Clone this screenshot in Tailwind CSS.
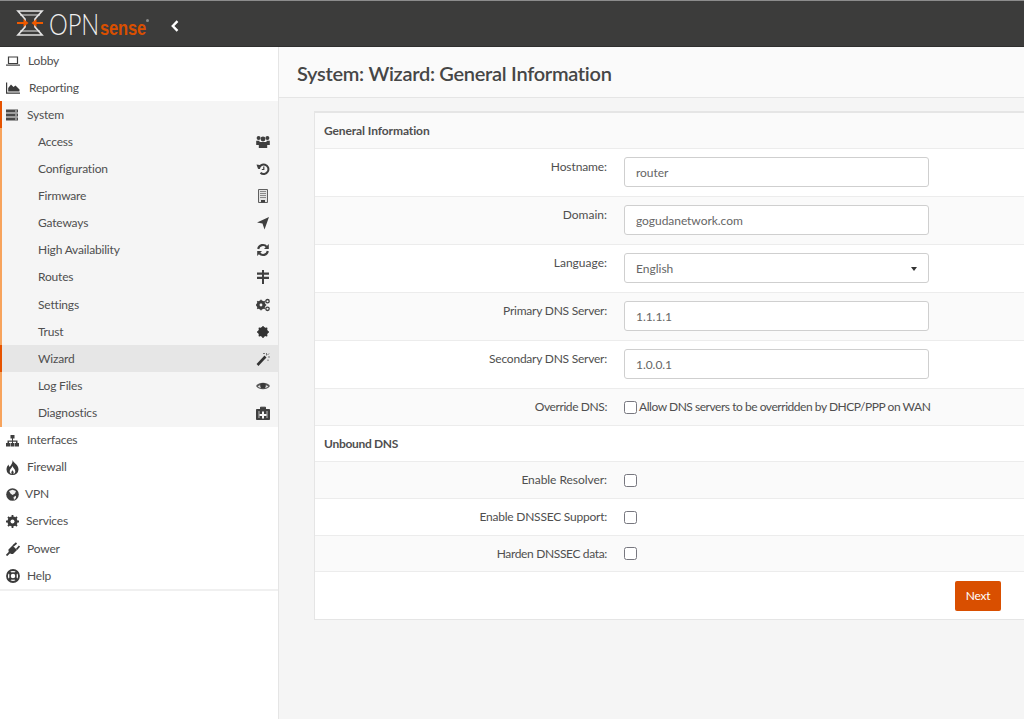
<!DOCTYPE html>
<html lang="en">
<head>
<meta charset="UTF-8">
<title>System: Wizard: General Information</title>
<script src="https://cdn.jsdelivr.net/npm/@tailwindcss/browser@4"></script>
</head>
<body class="h-[719px] w-[1024px] overflow-hidden bg-[#f5f5f5] font-['Lato',sans-serif] text-[12px] tracking-[-0.18px] text-[#4f4f4f]">

<header class="flex h-[47px] items-center border-t border-b border-t-[#8c8c8c] border-b-[#2f2f2e] bg-[#3c3c3b]">
  <svg class="ml-[17px] h-[30px] w-[136px] overflow-visible" viewBox="0 0 136 30">
    <g fill="none" stroke="#e4e4e4" stroke-width="1.700">
      <path d="M1 2h24l-7 8v8l7 8H1l7-8v-8z"/>
      <path d="M3 6h20M3 22h20" stroke-width="1"/>
    </g>
    <path d="M0 13h6.500v-3l5 4-5 4v-3H0zM26 13h-6.500v-3l-5 4 5 4v-3H26z" fill="#ef5a00"/>
    <text x="32" y="26" font-family="Lato, sans-serif" font-size="30" font-weight="300" fill="#f0f0f0" textLength="50" lengthAdjust="spacingAndGlyphs">OPN</text>
    <text x="83" y="26" font-family="Liberation Sans, sans-serif" font-size="21" font-weight="700" fill="#d94f00" textLength="46" lengthAdjust="spacingAndGlyphs">sense</text>
    <circle cx="130.500" cy="11.500" r="1.500" fill="#8c8c8c"/>
  </svg>
  <svg class="ml-[18px] mt-[5px] h-[12px] w-[8px]" viewBox="0 0 8 12"><path d="M6.500 1.200 1.800 6l4.700 4.800" fill="none" stroke="#fff" stroke-width="2.400"/></svg>
</header>

<div class="flex h-[672px]">
  <nav class="w-[279px] shrink-0 border-r border-[#e5e5e5] bg-white">
    <ul class="border-b-2 border-[#f0f0f0]">
      <li class="flex h-[27.12px] items-center"><svg class="ml-[6px] mr-[8px] h-[14px] w-[14px]" viewBox="0 0 14 14"><path d="M2.500 3h9v6.500h-9z" fill="none" stroke="#3f3f3f" stroke-width="1.200"/><path d="M0 10.500h14v1.200H0z" fill="#3f3f3f"/></svg><span>Lobby</span></li>
      <li class="flex h-[27.12px] items-center"><svg class="ml-[6px] mr-[9px] h-[14px] w-[14px] fill-[#3a3a3a]" viewBox="0 0 14 14"><path d="M0 1.500h1.200v10H14v1.200H0zM2.200 10.500V7L5 3.500 7.500 6 9.500 4.500 13.500 8.500v2z"/></svg><span>Reporting</span></li>
      <li class="flex h-[27.12px] items-center border-l-2 border-[#e65300] bg-[#f5f5f5]"><svg class="ml-[4px] mr-[9px] h-[12px] w-[12px] fill-[#4a4a4a]" viewBox="0 0 12 12"><path d="M0 .500h12v3H0zM0 4.500h12v3H0zM0 8.500h12v3H0z"/><path d="M9 1.500h2v1H9zM9 5.500h2v1H9zM9 9.500h2v1H9z" fill="#d8d8d8"/></svg><span>System</span></li>

      <li class="flex h-[27.12px] items-center justify-between border-l-2 border-[#f7a35c] bg-[#f5f5f5] pl-[36px] pr-[8px]"><span>Access</span><svg class="h-[14px] w-[14px] fill-[#3f3f3f]" viewBox="0 0 14 14"><circle cx="2.600" cy="3" r="2"/><circle cx="11.400" cy="3" r="2"/><circle cx="7" cy="4" r="2.400"/><path d="M.2 5.800h3.300v4.200H.2zM10.500 5.800h3.300V10h-3.300zM2.800 7h8.400v6H2.800z"/></svg></li>
      <li class="flex h-[27.12px] items-center justify-between border-l-2 border-[#f7a35c] bg-[#f5f5f5] pl-[36px] pr-[8px]"><span>Configuration</span><svg class="h-[14px] w-[14px]" viewBox="0 0 14 14"><path d="M3 7a4.700 4.700 0 1 1 1.500 3.700" fill="none" stroke="#3f3f3f" stroke-width="2"/><path d="M.5 2.500l5 .8-3.500 3.500z" fill="#3f3f3f"/><path d="M7.800 4.500v3H5.800" fill="none" stroke="#3f3f3f" stroke-width="1.200"/></svg></li>
      <li class="flex h-[27.12px] items-center justify-between border-l-2 border-[#f7a35c] bg-[#f5f5f5] pl-[36px] pr-[8px]"><span>Firmware</span><svg class="h-[14px] w-[14px]" viewBox="0 0 14 14"><path d="M2.500.5h9v13h-9z" fill="#e4e4e4" stroke="#5f5f5f"/><path d="M4 2.500h6M4 4.500h6M4 6.500h6M4 8.500h6" stroke="#8a8a8a"/><path d="M5 13.500V11h4v2.500z" fill="#3f3f3f"/></svg></li>
      <li class="flex h-[27.12px] items-center justify-between border-l-2 border-[#f7a35c] bg-[#f5f5f5] pl-[36px] pr-[8px]"><span>Gateways</span><svg class="h-[14px] w-[14px] fill-[#3f3f3f]" viewBox="0 0 14 14"><path d="M13 1 8.500 13.500 6.500 7.500 1 6.500z"/></svg></li>
      <li class="flex h-[27.12px] items-center justify-between border-l-2 border-[#f7a35c] bg-[#f5f5f5] pl-[36px] pr-[8px]"><span>High Availability</span><svg class="h-[14px] w-[14px]" viewBox="0 0 14 14"><path d="M2.200 6a4.800 4.800 0 0 1 8.500-2.200M11.800 8a4.800 4.800 0 0 1-8.500 2.200" fill="none" stroke="#3f3f3f" stroke-width="2.100"/><path d="M12.800 1v5H8zM1.200 13V8H6z" fill="#3f3f3f"/></svg></li>
      <li class="flex h-[27.12px] items-center justify-between border-l-2 border-[#f7a35c] bg-[#f5f5f5] pl-[36px] pr-[8px]"><span>Routes</span><svg class="h-[14px] w-[14px] fill-[#3f3f3f]" viewBox="0 0 14 14"><path d="M6 0h2v14H6zM1 2.500h12v2.200H1zM1 6.800h12V9H1z"/></svg></li>
      <li class="flex h-[27.12px] items-center justify-between border-l-2 border-[#f7a35c] bg-[#f5f5f5] pl-[36px] pr-[8px]"><span>Settings</span><svg class="h-[14px] w-[14px]" viewBox="0 0 14 14"><circle cx="5" cy="7" r="3.200" fill="none" stroke="#3f3f3f" stroke-width="2.600"/><path d="M5 1.800v10.400M-.2 7h10.400M1.300 3.300l7.400 7.400M8.700 3.300l-7.400 7.400" stroke="#3f3f3f" stroke-width="1.500"/><circle cx="5" cy="7" r="1.400" fill="#f5f5f5"/><circle cx="11.500" cy="3.200" r="1.700" fill="none" stroke="#3f3f3f" stroke-width="1.300"/><circle cx="11.500" cy="10.800" r="1.700" fill="none" stroke="#3f3f3f" stroke-width="1.300"/></svg></li>
      <li class="flex h-[27.12px] items-center justify-between border-l-2 border-[#f7a35c] bg-[#f5f5f5] pl-[36px] pr-[8px]"><span>Trust</span><svg class="h-[14px] w-[14px] fill-[#333]" viewBox="0 0 14 14"><circle cx="7" cy="7" r="5"/><path d="M7 1v12M1 7h12M2.800 2.800l8.400 8.400M11.200 2.800l-8.400 8.400" stroke="#333" stroke-width="1.400"/></svg></li>
      <li class="flex h-[27.12px] items-center justify-between border-l-2 border-[#e65300] bg-[#e6e6e6] pl-[36px] pr-[8px]"><span>Wizard</span><svg class="h-[14px] w-[14px]" viewBox="0 0 14 14"><path d="M1.500 13 9.500 4.500" stroke="#333" stroke-width="2.600"/><path d="M10.500 1v2.500M12 5h2M7 1.500h2M12 7.500v1.500M13 1.500l-1.500 1.500" stroke="#777"/></svg></li>
      <li class="flex h-[27.12px] items-center justify-between border-l-2 border-[#f7a35c] bg-[#f5f5f5] pl-[36px] pr-[8px]"><span>Log Files</span><svg class="h-[14px] w-[14px]" viewBox="0 0 14 14"><path d="M0 7C3 2.600 11 2.600 14 7 11 11.400 3 11.400 0 7z" fill="#555"/><path d="M1.800 7.500C4 5.600 10 5.600 12.200 7.500 10 9.800 4 9.800 1.800 7.500z" fill="#e2e2e2"/><circle cx="7" cy="6.800" r="2.800" fill="#3a3a3a"/></svg></li>
      <li class="flex h-[27.12px] items-center justify-between border-l-2 border-[#f7a35c] bg-[#f5f5f5] pl-[36px] pr-[8px]"><span>Diagnostics</span><svg class="h-[14px] w-[14px]" viewBox="0 0 14 14"><path d="M.5 3.500h13v10H.5zM4.500 3.500V1.200h5v2.300" fill="#3f3f3f" stroke="#3f3f3f"/><path d="M2.500 5H3.500v7h-1zM10.500 5h1v7h-1z" fill="#bdbdbd"/><path d="M6 5.500h2V8h2.500v2H8v2.500H6V10H3.500V8H6z" fill="#f5f5f5"/></svg></li>

      <li class="flex h-[27.12px] items-center"><svg class="ml-[6px] mr-[8px] h-[13px] w-[13px] fill-[#3f3f3f]" viewBox="0 0 13 13"><path d="M4.500 1h4v3.500H7v2h4.500V9H13v3.500H9V9h1V7.800H7V9h1.500v3.500h-4V9H6V7.800H3V9h1v3.500H0V9h1.500V6.500H6v-2H4.500z"/></svg><span>Interfaces</span></li>
      <li class="flex h-[27.12px] items-center"><svg class="ml-[6px] mr-[8px] h-[15px] w-[13px]" viewBox="0 0 13 15"><path d="M6.500 0c.8 3 6 4.500 6 9.500a6 5.500 0 0 1-12 0c0-2.200 1-3.800 2.200-5 0 1 .3 2 1 2.300C5 5 7 3 6.500 0z" fill="#3a3a3a"/><path d="M6.500 6c.3 2 2.800 3 2.800 5.300a2.800 2.800 0 0 1-5.600 0C3.700 9 6.200 8 6.500 6z" fill="#fff"/><path d="M6.500 10c.3 1 1.200 1.500 1.200 3a1.200 1.200 0 0 1-2.400 0c0-1.500.9-2 1.200-3z" fill="#3a3a3a"/></svg><span>Firewall</span></li>
      <li class="flex h-[27.12px] items-center"><svg class="ml-[6px] mr-[6px] h-[13px] w-[13px]" viewBox="0 0 13 13"><circle cx="6.500" cy="6.500" r="6.300" fill="#3f3f3f"/><path d="M3 3l3.500-1.300L10 3 9 5.500 6.500 7 4.500 5.500zM7.500 9l2.500-1.200v2.200L8 12z" fill="#f0f0f0"/></svg><span>VPN</span></li>
      <li class="flex h-[27.12px] items-center"><svg class="ml-[6px] mr-[7px] h-[13px] w-[13px]" viewBox="0 0 13 13"><circle cx="6.500" cy="6.500" r="3.600" fill="none" stroke="#3a3a3a" stroke-width="3"/><path d="M6.500 0v13M0 6.500h13M2 2l9 9M11 2l-9 9" stroke="#3a3a3a" stroke-width="1.800"/><circle cx="6.500" cy="6.500" r="2" fill="#fff"/></svg><span>Services</span></li>
      <li class="flex h-[27.12px] items-center"><svg class="ml-[6px] mr-[7px] h-[14px] w-[14px]" viewBox="0 0 14 14"><path d="M.5 13.500 4 10" stroke="#3a3a3a" stroke-width="1.800"/><path d="M2.500 7.500 6.500 3.500l4.500 4.500-4 4c-2.500.5-5-2-4.500-4.500z" fill="#3a3a3a"/><path d="M7 4 10.500 1M10.500 7.500 13.500 4" stroke="#3a3a3a" stroke-width="1.800"/></svg><span>Power</span></li>
      <li class="flex h-[27.12px] items-center"><svg class="ml-[6px] mr-[7px] h-[14px] w-[14px]" viewBox="0 0 14 14"><circle cx="7" cy="7" r="6" fill="none" stroke="#3a3a3a" stroke-width="1.800"/><circle cx="7" cy="7" r="3" fill="none" stroke="#3a3a3a" stroke-width="1.500"/><path d="M2.800 2.800l2.200 2.200M11.200 2.800 9 5M2.800 11.200 5 9M11.200 11.200 9 9" stroke="#3a3a3a" stroke-width="2.600"/></svg><span>Help</span></li>
    </ul>
  </nav>

  <main class="min-w-0 flex-1">
    <div class="flex h-[51px] items-center border-b border-[#e5e5e5] bg-[#fafafa] pl-[18px] pt-px">
      <h1 class="text-[20px] font-semibold tracking-[-0.29px] text-[#464646]">System: Wizard: General Information</h1>
    </div>
    <div class="ml-[35px] mt-[13px] border border-r-0 border-t-2 border-[#e5e5e5] bg-white">
      <div class="flex h-[36px] items-center border-b border-[#ececec] bg-[#fafafa] pl-[9px] font-bold tracking-[-0.1px]">General Information</div>

      <div class="flex h-[48px] border-b border-[#ececec]">
        <label class="w-[292px] pt-[9px] text-right tracking-[-0.1px]">Hostname:</label>
        <div class="ml-[17px] pt-[8px]"><input value="router" class="h-[30px] w-[305px] rounded-[3px] border border-[#cfcfcf] bg-white px-[11px] tracking-[-0.05px] text-[#666]"></div>
      </div>
      <div class="flex h-[48px] border-b border-[#ececec] bg-[#fafafa]">
        <label class="w-[292px] pt-[9px] text-right tracking-normal">Domain:</label>
        <div class="ml-[17px] pt-[8px]"><input value="gogudanetwork.com" class="h-[30px] w-[305px] rounded-[3px] border border-[#cfcfcf] bg-white px-[11px] tracking-[-0.05px] text-[#666]"></div>
      </div>
      <div class="flex h-[48px] border-b border-[#ececec]">
        <label class="w-[292px] pt-[9px] text-right tracking-normal">Language:</label>
        <div class="ml-[17px] pt-[8px]"><div class="flex h-[30px] w-[305px] items-center justify-between rounded-[3px] border border-[#cfcfcf] bg-white px-[11px] pt-px tracking-normal text-[#666]"><span>English</span><span class="h-0 w-0 border-x-[3.500px] border-t-[4px] border-x-transparent border-t-[#333]"></span></div></div>
      </div>
      <div class="flex h-[48px] border-b border-[#ececec] bg-[#fafafa]">
        <label class="w-[292px] pt-[9px] text-right tracking-[-0.23px]">Primary DNS Server:</label>
        <div class="ml-[17px] pt-[8px]"><input value="1.1.1.1" class="h-[30px] w-[305px] rounded-[3px] border border-[#cfcfcf] bg-white px-[11px] tracking-[-0.05px] text-[#666]"></div>
      </div>
      <div class="flex h-[48px] border-b border-[#ececec]">
        <label class="w-[292px] pt-[9px] text-right tracking-[-0.23px]">Secondary DNS Server:</label>
        <div class="ml-[17px] pt-[8px]"><input value="1.0.0.1" class="h-[30px] w-[305px] rounded-[3px] border border-[#cfcfcf] bg-white px-[11px] tracking-[-0.05px] text-[#666]"></div>
      </div>
      <div class="flex h-[37px] items-center border-b border-[#ececec] bg-[#fafafa]">
        <label class="w-[292px] text-right tracking-[-0.4px]">Override DNS:</label>
        <div class="ml-[17px] flex items-center"><span class="mr-[2px] h-[13px] w-[13px] rounded-[2.500px] border-[1.500px] border-[#77777f] bg-white"></span><span class="tracking-[-0.46px]">Allow DNS servers to be overridden by DHCP/PPP on WAN</span></div>
      </div>

      <div class="flex h-[36px] items-center border-b border-[#ececec] pl-[9px] font-bold tracking-[-0.3px]">Unbound DNS</div>

      <div class="flex h-[37px] items-center border-b border-[#ececec] bg-[#fafafa]">
        <label class="w-[292px] text-right tracking-[-0.05px]">Enable Resolver:</label>
        <div class="ml-[17px]"><span class="block h-[13px] w-[13px] rounded-[2.500px] border-[1.500px] border-[#77777f] bg-white"></span></div>
      </div>
      <div class="flex h-[37px] items-center border-b border-[#ececec]">
        <label class="w-[292px] text-right tracking-[-0.23px]">Enable DNSSEC Support:</label>
        <div class="ml-[17px]"><span class="block h-[13px] w-[13px] rounded-[2.500px] border-[1.500px] border-[#77777f] bg-white"></span></div>
      </div>
      <div class="flex h-[36px] items-center border-b border-[#ececec] bg-[#fafafa]">
        <label class="w-[292px] text-right tracking-[-0.35px]">Harden DNSSEC data:</label>
        <div class="ml-[17px]"><span class="block h-[13px] w-[13px] rounded-[2.500px] border-[1.500px] border-[#77777f] bg-white"></span></div>
      </div>

      <div class="flex h-[47px] items-center justify-end pr-[23px]">
        <button class="h-[30px] w-[46px] rounded-[2px] bg-[#d94f00] tracking-[-0.3px] text-white">Next</button>
      </div>
    </div>
  </main>
</div>
</body>
</html>
